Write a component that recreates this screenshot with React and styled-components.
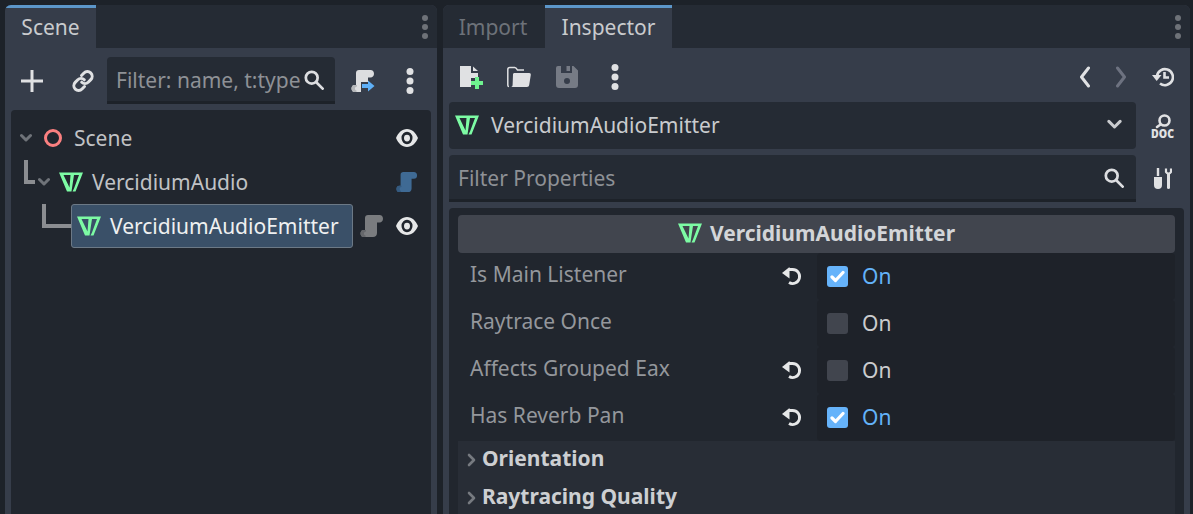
import React from "react";
import styled, { createGlobalStyle } from "styled-components";

const GlobalStyle = createGlobalStyle`
  html, body {
    margin: 0;
    padding: 0;
    background: #1d2229;
  }
  * {
    box-sizing: border-box;
  }
`;

const Editor = styled.div`
  width: 1193px;
  height: 514px;
  display: flex;
  gap: 6px;
  padding: 5px 3px 0 5px;
  overflow: hidden;
  background: #1d2229;
  font-family: "Noto Sans", sans-serif;
  font-size: 21px;
  line-height: 28px;
`;

const Dock = styled.section`
  width: ${(p) => p.$width};
  height: 520px;
  flex: none;
  display: flex;
  flex-direction: column;
  background: #363d4a;
  border-radius: 6px 6px 0 0;
  overflow: hidden;
`;

const TabBar = styled.div`
  height: 43px;
  flex: none;
  display: flex;
  background: #252b34;
`;

const Tab = styled.div`
  width: ${(p) => p.$width};
  display: flex;
  align-items: center;
  justify-content: center;
  padding: 0 ${(p) => (p.$active ? "0" : "2px")} 3px 0;
  border-top: 3px solid ${(p) => (p.$active ? "#5c96c9" : "transparent")};
  background: ${(p) => (p.$active ? "#363d4a" : "transparent")};
  color: ${(p) => (p.$active ? "#c9cbce" : "#6d7279")};
`;

const TabMenu = styled.div`
  margin-left: auto;
  width: 24px;
  display: flex;
  align-items: center;
  justify-content: center;
  color: #6e7278;
`;

const Toolbar = styled.div`
  height: ${(p) => p.$height};
  flex: none;
  display: flex;
  align-items: flex-start;
  padding: ${(p) => p.$pad};
`;

const ToolButton = styled.div`
  width: ${(p) => p.$width || "48px"};
  height: 47px;
  flex: none;
  display: flex;
  align-items: center;
  justify-content: center;
  color: #e0e1e3;
`;

const Spacer = styled.div`
  flex: 1;
`;

const Field = styled.div`
  width: ${(p) => p.$width};
  height: 47px;
  flex: none;
  display: flex;
  align-items: center;
  gap: 3px;
  padding: 1px 12px 0 9px;
  background: #252b34;
  border-radius: 4px 4px 0 0;
  border-bottom: 3px solid #1d2229;
  color: #8e9196;
  white-space: nowrap;
  overflow: hidden;
`;

const FieldText = styled.span`
  flex: 1;
`;

const FieldIcon = styled.div`
  width: 20px;
  flex: none;
  display: flex;
`;

const Selector = styled.div`
  width: 687px;
  height: 47px;
  flex: none;
  display: flex;
  align-items: center;
  gap: 12px;
  padding: 0 14px 2px 6px;
  background: #252b34;
  border-radius: 4px;
  color: #c9cbce;
`;

const Row = styled.div`
  display: flex;
  padding: 0 6px;
  margin-bottom: ${(p) => p.$gap || "0"};
`;

const TreePanel = styled.div`
  flex: 1;
  margin: 0 6px;
  padding-top: 6px;
  background: #21262e;
  border-radius: 4px 4px 0 0;
`;

const TreeRow = styled.div`
  height: 44px;
  display: flex;
  align-items: center;
  padding-left: ${(p) => p.$indent};
  color: #c0c2c5;
`;

const Connector = styled.div`
  width: ${(p) => p.$width};
  height: 24px;
  flex: none;
  align-self: flex-start;
  border-left: 4px solid #8b8d91;
  border-bottom: 4px solid #8b8d91;
`;

const Fold = styled.div`
  width: 12px;
  flex: none;
  display: flex;
  margin: 0 ${(p) => p.$after} 0 ${(p) => p.$before || "0"};
  color: #6f7379;
`;

const NodeLabel = styled.span`
  margin-left: ${(p) => p.$left};
  white-space: nowrap;
`;

const SelectedNode = styled.div`
  width: 282px;
  height: 44px;
  flex: none;
  display: flex;
  align-items: center;
  gap: 9px;
  padding-left: 5px;
  background: #3a5068;
  border: 1px solid #6c7986;
  border-radius: 3px;
  color: #eff0f1;
`;

const RowIcons = styled.div`
  margin-left: auto;
  width: ${(p) => p.$width};
  margin-right: 13px;
  flex: none;
  display: flex;
  align-items: center;
  justify-content: space-between;
`;

const InspectorList = styled.div`
  flex: 1;
  margin: 6px 6px 0;
  padding: 7px 9px 0;
  background: #21262e;
  border-radius: 4px 4px 0 0;
`;

const ClassHeader = styled.div`
  height: 38px;
  display: flex;
  align-items: center;
  justify-content: center;
  gap: 8px;
  padding-bottom: 3px;
  background: #41454e;
  border-radius: 4px;
  color: #d3d5d8;
  font-weight: 700;
`;

const Property = styled.div`
  height: 47px;
  display: grid;
  grid-template-columns: 359px 358px;
`;

const PropertyName = styled.div`
  display: flex;
  align-items: center;
  justify-content: space-between;
  padding: 0 14px 6px 12px;
  color: #94979c;
`;

const RevertIcon = styled.div`
  display: flex;
  margin-top: 4px;
`;

const PropertyValue = styled.div`
  display: flex;
  align-items: center;
  gap: 14px;
  padding: 0 0 2px 10px;
  background: #1e2229;
  border-radius: 4px;
  color: ${(p) => (p.$on ? "#63b2f8" : "#cbccce")};
`;

const Check = styled.div`
  width: 21px;
  height: 21px;
  flex: none;
  display: flex;
  align-items: center;
  justify-content: center;
  margin-top: 1px;
  background: ${(p) => (p.$on ? "#66b3fa" : "#41454e")};
  border-radius: 3px;
`;

const Section = styled.div`
  height: 38px;
  display: flex;
  align-items: center;
  gap: 6px;
  padding: 0 0 4px 9px;
  background: #282d36;
  color: #cdcfd2;
  font-weight: 700;
`;

const SectionArrow = styled.div`
  width: 9px;
  display: flex;
  margin-top: 3px;
  color: #767a80;
`;

const Kebab = ({ r = 3.5, gap = 9.5 }) => (
  <svg width="10" height="32" viewBox="0 0 10 32" fill="currentColor">
    <circle cx="5" cy={16 - gap} r={r} />
    <circle cx="5" cy="16" r={r} />
    <circle cx="5" cy={16 + gap} r={r} />
  </svg>
);

const PlusIcon = () => (
  <svg width="24" height="24" viewBox="0 0 24 24" fill="currentColor">
    <path d="M10.5 1h3v9.5H23v3h-9.5V23h-3v-9.5H1v-3h9.5z" />
  </svg>
);

const LinkIcon = () => (
  <svg width="24" height="24" viewBox="0 0 24 24" fill="none" stroke="currentColor" strokeWidth="3" strokeLinecap="round">
    <path d="M10.5 6.5l2.5-2.5a4.6 4.6 0 0 1 6.8 6.6l-2.6 2.6a4.6 4.6 0 0 1-6.5 0" />
    <path d="M13.5 17.5L11 20a4.6 4.6 0 0 1-6.8-6.6l2.6-2.6a4.6 4.6 0 0 1 6.5 0" />
  </svg>
);

const SearchIcon = () => (
  <svg width="20" height="20" viewBox="0 0 22 22" fill="none" stroke="#dcdde0" strokeWidth="3">
    <circle cx="8.5" cy="8.5" r="6.5" />
    <path d="M13.5 13.5l7 7" strokeLinecap="round" />
  </svg>
);

const ScriptShape = ({ fill, shade, arrow }) => (
  <svg width="24" height="24" viewBox="0 0 24 24">
    <path
      fill={fill}
      d="M8 1h11.500c2.200 0 3.500 1.600 3.500 3.800 0 2-1.200 3.700-3.500 3.700H17V19c0 2.500-1.600 4-4 4H3.500C1.500 23 .5 21.400.5 19.500S1.500 16 3.500 16H5V4c0-1.800 1.200-3 3-3z"
    />
    <path fill={shade} d="M3.500 16H6v1.500c-1.500 0-2 1-2 2s.5 2 1.500 2V23h-2C1.500 23 .5 21.400.5 19.500S1.500 16 3.500 16z" />
    {arrow && (
      <>
        <rect x="10" y="13" width="14" height="10" fill="#363d4a" />
        <path fill="#5fb0f7" d="M17 11.500l6.500 5.500-6.500 5.500V19h-6v-4h6z" />
      </>
    )}
  </svg>
);

const EyeIcon = () => (
  <svg width="22" height="18" viewBox="0 0 22 16" preserveAspectRatio="none" fill="none">
    <path
      fill="#e6e7e8"
      fillRule="evenodd"
      d="M11 0c5 0 9 3.500 11 8-2 4.500-6 8-11 8S2 12.500 0 8c2-4.500 6-8 11-8zm0 2.500a5.500 5.500 0 1 0 0 11 5.500 5.500 0 0 0 0-11z"
    />
    <circle cx="11" cy="8" r="3" fill="#e6e7e8" />
  </svg>
);

const VercidiumIcon = () => (
  <svg width="24" height="20" viewBox="0 0 24 20">
    <path
      fill="#7dfba4"
      fillRule="evenodd"
      d="M0 .5h24L16.500 19.500H8zM4.500 3h7L10.500 15.500zM15 3h5L15 16.500l-1.500 3h-1z"
    />
  </svg>
);

const ChevronDown = ({ size = 12, width = 3 }) => (
  <svg width={size} height={size} viewBox="0 0 12 12" fill="none" stroke="currentColor" strokeWidth={width} strokeLinecap="round" strokeLinejoin="round">
    <path d="M1.500 3.500L6 8l4.500-4.500" />
  </svg>
);

const NewFileIcon = () => (
  <svg width="24" height="24" viewBox="0 0 24 24">
    <path fill="#e0e1e3" d="M1 1h11v7h7v5h-7v9H1z" />
    <path fill="#e0e1e3" d="M14 1.500L19 6h-5z" />
    <path fill="#6ef28f" d="M16 12h4v4h4v4h-4v4h-4v-4h-4v-4h4z" />
  </svg>
);

const FolderIcon = () => (
  <svg width="24" height="22" viewBox="0 0 24 22">
    <path fill="none" stroke="#e0e1e3" strokeWidth="1.500" d="M2 20.500c-.8 0-1.200-.5-1.200-1.300V3.500C.8 2.200 1.500 1.500 2.800 1.500h5c1.300 0 2 1.300 2.700 2.500H17" />
    <path fill="#e0e1e3" d="M7.500 7h14.700c1.200 0 1.800.8 1.600 2l-1.600 10c-.2 1.300-1 2-2.200 2H4c1 0 1.500-.7 1.600-2L6 8.500C6.100 7.500 6.600 7 7.500 7z" />
  </svg>
);

const SaveIcon = () => (
  <svg width="24" height="24" viewBox="0 0 24 24">
    <path
      fill="#767b85"
      fillRule="evenodd"
      d="M3 1h3v7h11V1h1.500L23 5.500V20a3 3 0 0 1-3 3H4a3 3 0 0 1-3-3V3a2 2 0 0 1 2-2zm9 12a3 3 0 1 0 0 6 3 3 0 0 0 0-6zM11.500 1H15v5h-3.500z"
    />
  </svg>
);

const NavArrow = ({ back, color }) => (
  <svg width="12" height="22" viewBox="0 0 12 22" fill="none" stroke={color} strokeWidth="3" strokeLinecap="round" strokeLinejoin="round">
    <path d={back ? "M9.500 2L2.500 11l7 9" : "M2.500 2l7 9-7 9"} />
  </svg>
);

const HistoryIcon = () => (
  <svg width="22" height="20" viewBox="0 0 22 20" fill="none" stroke="#e0e1e3" strokeWidth="2.600">
    <path d="M5 9a8 8 0 1 1 3 7.500" />
    <path d="M12.500 5v5.500H17" />
    <path fill="#e0e1e3" stroke="none" d="M0 8h9.500l-4.800 6z" />
  </svg>
);

const DocIcon = () => (
  <svg width="34" height="32" viewBox="0 0 34 32">
    <circle cx="18.500" cy="10.500" r="5" fill="none" stroke="#e0e1e3" strokeWidth="2.600" />
    <path d="M14.500 14.500L11 17" stroke="#e0e1e3" strokeWidth="2.600" strokeLinecap="round" />
    <text x="5" y="27.500" textLength="23" lengthAdjust="spacingAndGlyphs" fontFamily="Noto Sans" fontWeight="900" fontSize="13" fill="#e0e1e3">
      DOC
    </text>
  </svg>
);

const ToolsIcon = () => (
  <svg width="18" height="21" viewBox="0 0 18 21">
    <path fill="#e0e1e3" d="M2.800 0h2.400v8H2.800z" />
    <path fill="#e0e1e3" d="M0 9h8v8a4 4 0 0 1-8 0z" />
    <path fill="none" stroke="#e0e1e3" strokeWidth="2.200" d="M12 .5v3.500a2.800 2.800 0 0 0 5 0V.5" />
    <path fill="#e0e1e3" d="M13 6h3v13.500a1.500 1.500 0 0 1-3 0z" />
  </svg>
);

const RevertArrow = () => (
  <svg width="22" height="20" viewBox="0 0 22 20" fill="none" stroke="#e6e7e8" strokeWidth="2.800">
    <path d="M8 3.500h3.500a7 7 0 1 1-3.500 13" />
    <path fill="#e6e7e8" stroke="none" d="M8.500 1v11.500L1 7z" />
  </svg>
);

const CheckMark = () => (
  <svg width="15" height="13" viewBox="0 0 15 13" fill="none" stroke="#fff" strokeWidth="3.200" strokeLinecap="round" strokeLinejoin="round">
    <path d="M2 7l3.500 3.500L13 2.500" />
  </svg>
);

const SideArrow = () => (
  <svg width="9" height="14" viewBox="0 0 9 14" fill="none" stroke="currentColor" strokeWidth="2.600" strokeLinecap="round" strokeLinejoin="round">
    <path d="M2 2l5 5-5 5" />
  </svg>
);

const properties = [
  { name: "Is Main Listener", revert: true, on: true },
  { name: "Raytrace Once", revert: false, on: false },
  { name: "Affects Grouped Eax", revert: true, on: false },
  { name: "Has Reverb Pan", revert: true, on: true },
];

const App = () => (
  <Editor>
    <GlobalStyle />
    <Dock $width="432px">
      <TabBar>
        <Tab $active $width="91px">Scene</Tab>
        <TabMenu><Kebab r={3} gap={9} /></TabMenu>
      </TabBar>
      <Toolbar $height="62px" $pad="9px 0 0">
        <ToolButton $width="54px"><PlusIcon /></ToolButton>
        <ToolButton $width="48px"><LinkIcon /></ToolButton>
        <Field $width="228px">
          <FieldText>Filter: name, t:type</FieldText>
          <FieldIcon><SearchIcon /></FieldIcon>
        </Field>
        <ToolButton $width="56px"><ScriptShape fill="#dcdddf" shade="#b4b6b9" arrow /></ToolButton>
        <ToolButton $width="38px"><Kebab /></ToolButton>
      </Toolbar>
      <TreePanel>
        <TreeRow $indent="9px">
          <Fold $after="12px"><ChevronDown /></Fold>
          <svg width="18" height="18" viewBox="0 0 18 18" fill="none" stroke="#fb8080" strokeWidth="3">
            <circle cx="9" cy="9" r="7.500" />
          </svg>
          <NodeLabel $left="12px">Scene</NodeLabel>
          <RowIcons $width="22px"><EyeIcon /></RowIcons>
        </TreeRow>
        <TreeRow $indent="13px">
          <Connector $width="11px" />
          <Fold $before="3px" $after="9px"><ChevronDown /></Fold>
          <VercidiumIcon />
          <NodeLabel $left="9px">VercidiumAudio</NodeLabel>
          <RowIcons $width="22px"><ScriptShape fill="#3f6a94" shade="#345a80" /></RowIcons>
        </TreeRow>
        <TreeRow $indent="31px">
          <Connector $width="29px" />
          <SelectedNode>
            <VercidiumIcon />
            VercidiumAudioEmitter
          </SelectedNode>
          <RowIcons $width="58px">
            <ScriptShape fill="#7a7c7f" shade="#65676b" />
            <EyeIcon />
          </RowIcons>
        </TreeRow>
      </TreePanel>
    </Dock>
    <Dock $width="747px">
      <TabBar>
        <Tab $width="102px">Import</Tab>
        <Tab $active $width="127px">Inspector</Tab>
        <TabMenu><Kebab r={3} gap={9} /></TabMenu>
      </TabBar>
      <Toolbar $height="54px" $pad="5px 3px 0 4px">
        <ToolButton><NewFileIcon /></ToolButton>
        <ToolButton><FolderIcon /></ToolButton>
        <ToolButton><SaveIcon /></ToolButton>
        <ToolButton><Kebab /></ToolButton>
        <Spacer />
        <ToolButton $width="36px"><NavArrow back color="#e0e1e3" /></ToolButton>
        <ToolButton $width="36px"><NavArrow color="#6d7280" /></ToolButton>
        <ToolButton $width="48px"><HistoryIcon /></ToolButton>
      </Toolbar>
      <Row $gap="6px">
        <Selector>
          <VercidiumIcon />
          <FieldText>VercidiumAudioEmitter</FieldText>
          <ChevronDown size={15} width={2.400} />
        </Selector>
        <ToolButton $width="54px"><DocIcon /></ToolButton>
      </Row>
      <Row>
        <Field $width="687px">
          <FieldText>Filter Properties</FieldText>
          <FieldIcon><SearchIcon /></FieldIcon>
        </Field>
        <ToolButton $width="54px"><ToolsIcon /></ToolButton>
      </Row>
      <InspectorList>
        <ClassHeader>
          <VercidiumIcon />
          VercidiumAudioEmitter
        </ClassHeader>
        {properties.map((prop) => (
          <Property key={prop.name}>
            <PropertyName>
              {prop.name}
              {prop.revert && <RevertIcon><RevertArrow /></RevertIcon>}
            </PropertyName>
            <PropertyValue $on={prop.on}>
              <Check $on={prop.on}>{prop.on && <CheckMark />}</Check>
              On
            </PropertyValue>
          </Property>
        ))}
        <Section>
          <SectionArrow><SideArrow /></SectionArrow>
          Orientation
        </Section>
        <Section>
          <SectionArrow><SideArrow /></SectionArrow>
          Raytracing Quality
        </Section>
      </InspectorList>
    </Dock>
  </Editor>
);

export default App;
